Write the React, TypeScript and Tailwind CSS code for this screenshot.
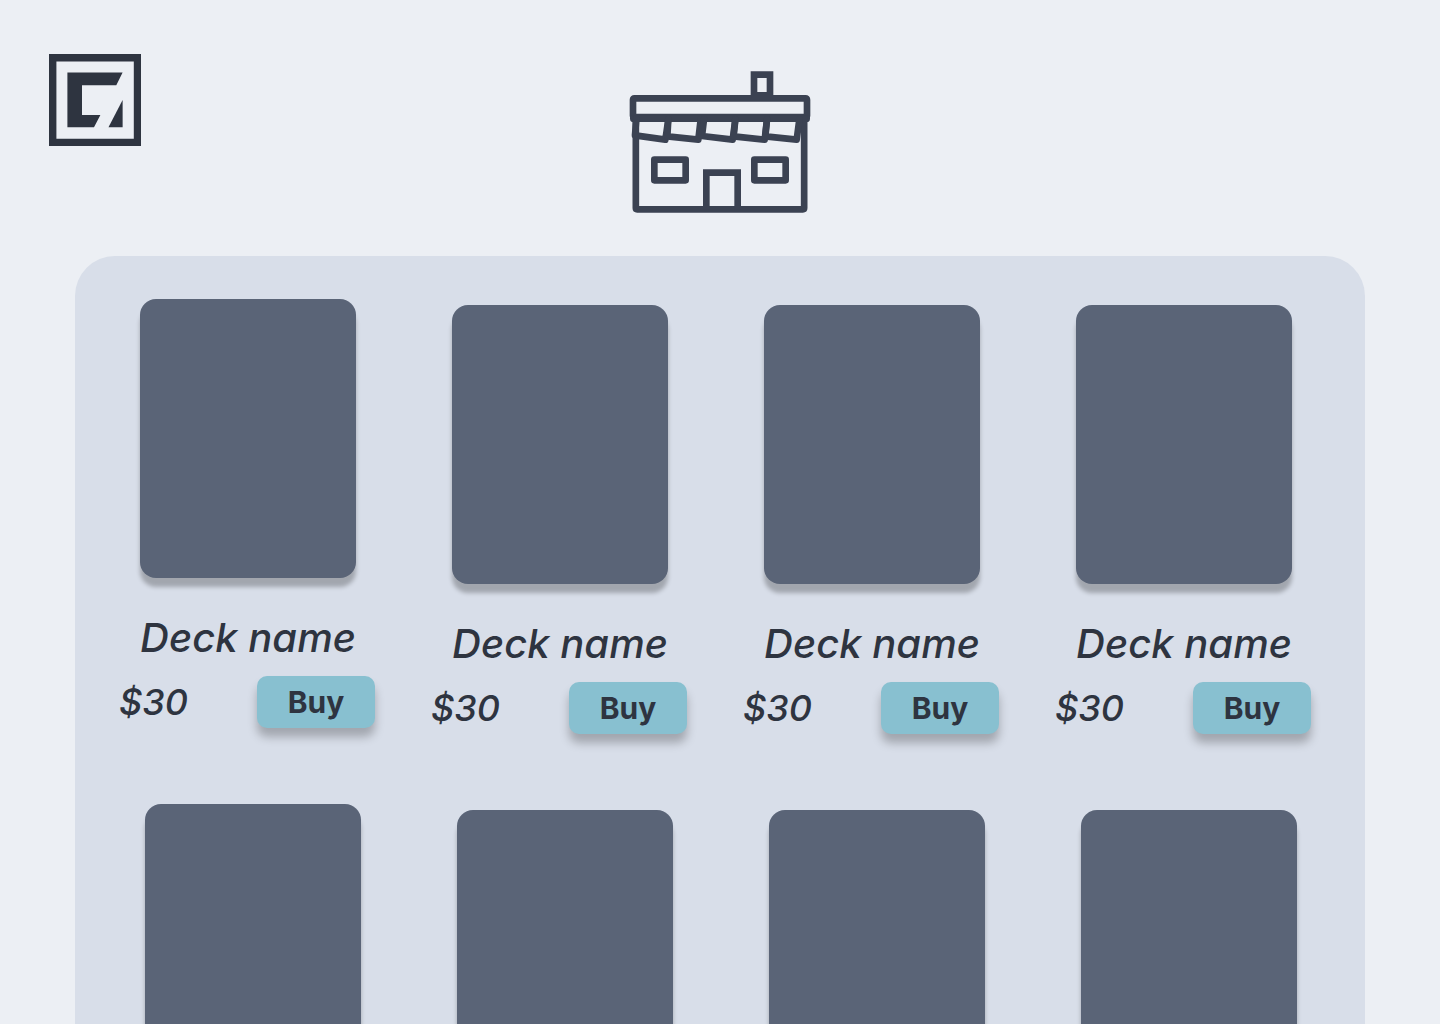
type Deck = { id: number; name: string; price: string };

const decks: Deck[] = [0, 1, 2, 3].map((id) => ({ id, name: "Deck name", price: "$30" }));

function Logo() {
  return (
    <svg width="92" height="92" viewBox="0 0 92 92" fill="#2e3440" aria-hidden="true">
      <path fillRule="evenodd" d="M0 0H92.3V92.3H0ZM7.4 7.4V84.8H84.8V7.4Z" />
      <path d="M18.4 18.4H73.6L67.3 31.2H33V61H51.4L45 73.3H18.4Z" />
      <path d="M73.6 46V73.3H59.5Z" />
    </svg>
  );
}

function StoreIcon() {
  return (
    <svg
      width="182"
      height="142"
      viewBox="27 33 546 426"
      fill="none"
      stroke="#3b4252"
      strokeWidth="20"
      strokeLinejoin="round"
      strokeLinecap="round"
      role="img"
      aria-label="Store"
    >
      <path d="M402 106V44H450V106Z" strokeLinejoin="miter" />
      <rect x="39" y="115" width="522" height="56" rx="4" />
      <path d="M40 176H560" />
      <path d="M47.5 176V444Q47.5 448 51.5 448H548.5Q552.5 448 552.5 444V176" />
      <path d="M103 299H197V361H103ZM403 299H497V361H403Z" />
      <path d="M259 448V338H353V448" strokeLinejoin="miter" strokeLinecap="butt" />
      <path d="M49 178L45 226L136 239L145 178" />
      <path d="M145 178L142 229L235 239L242 178" />
      <path d="M252 178L246 228L338 239L346 178" />
      <path d="M346 178L341 229L434 239L441 178" />
      <path d="M441 178L436 229L530 239L538 178" />
    </svg>
  );
}

function Cover() {
  return (
    <div className="mx-auto h-[279px] w-[216px] rounded-2xl bg-[#5a6477] shadow-[0_9px_4px_rgba(0,0,0,0.25)]" />
  );
}

function DeckCard({ deck }: { deck: Deck }) {
  return (
    <article className="flex flex-col">
      <Cover />
      <h2 className="mt-9 text-center text-[40px] leading-12 font-medium italic">{deck.name}</h2>
      <div className="mt-3.5 flex items-center justify-between pr-0.5">
        <span className="text-4xl font-medium italic">{deck.price}</span>
        <button
          type="button"
          className="h-[52px] w-[118px] rounded-[10px] bg-[#88c0d0] text-3xl font-bold shadow-[0_9px_10px_rgba(0,0,0,0.25)]"
        >
          Buy
        </button>
      </div>
    </article>
  );
}

export default function App() {
  return (
    <div className="flex h-screen flex-col bg-[#eceff4] font-['Inter',sans-serif] text-[#2e3440]">
      <header className="grid shrink-0 grid-cols-[1fr_auto_1fr] items-start px-[49px] pt-[54px] pb-[43px]">
        <a href="#" aria-label="Home" className="justify-self-start">
          <Logo />
        </a>
        <div className="pt-[17px]">
          <StoreIcon />
        </div>
      </header>
      <main className="mx-[75px] flex-1 overflow-y-auto rounded-t-[40px] bg-[#d8dee9] pt-[43px] [scrollbar-width:none]">
        <section className="grid grid-cols-4 gap-x-[54px] pr-[52px] pl-11 [&>*:not(:first-child)]:mt-1.5">
          {decks.map((deck) => (
            <DeckCard key={deck.id} deck={deck} />
          ))}
        </section>
        <section className="mt-[70px] mb-10 grid grid-cols-4 gap-x-[54px] pr-[47px] pl-[49px] [&>*:not(:first-child)]:mt-1.5">
          {decks.map((deck) => (
            <article key={deck.id}>
              <Cover />
            </article>
          ))}
        </section>
      </main>
    </div>
  );
}
